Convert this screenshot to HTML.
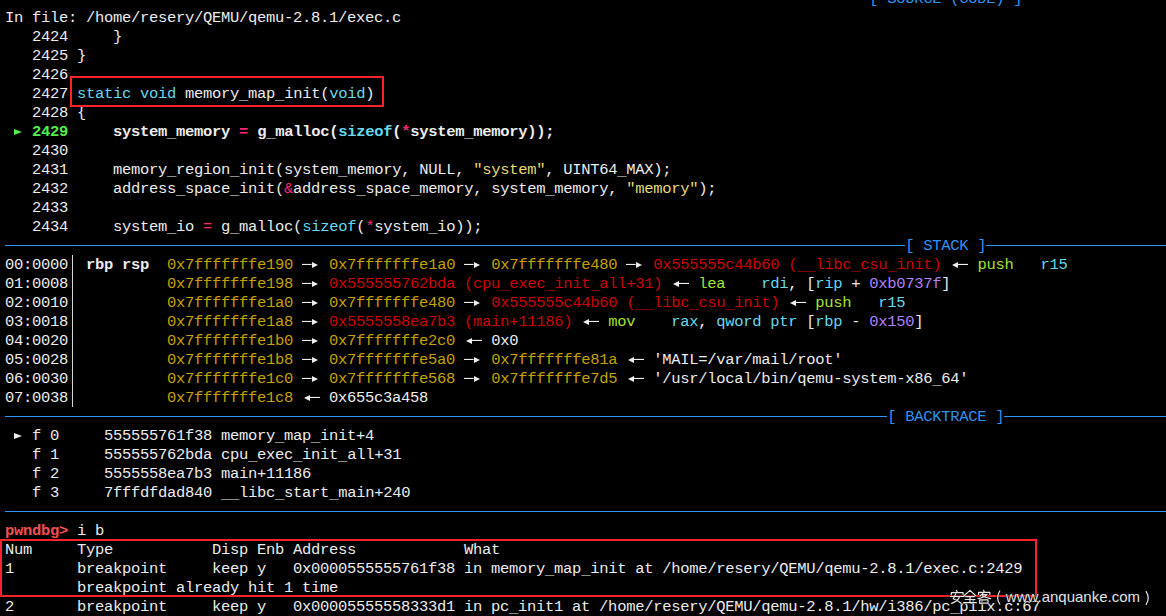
<!DOCTYPE html><html><head><meta charset="utf-8"><style>html,body{margin:0;padding:0;background:#000;width:1166px;height:616px;overflow:hidden;}
.t{position:absolute;left:5px;height:19px;line-height:19px;white-space:pre;font-family:"Liberation Mono",monospace;font-size:15.5px;letter-spacing:-0.3px;color:#ececec;}
.w{color:#ececec}
.b{color:#2f93f2}
.k{color:#66d9ef}
.s{color:#e6db74}
.o{color:#f92672}
.g{color:#52ee4c}
.y{color:#c4a000}
.r{color:#cc0000}
.f{color:#a6e22e}
.n{color:#ae81ff}
.p{color:#f25050}
.B{font-weight:bold}
u{text-decoration:none;position:relative;top:1px}
.A{display:inline-block;width:18px;height:19px;vertical-align:top;position:relative}
.A svg{position:absolute;left:0;top:0}
.T{display:inline-block;width:9px;height:19px;vertical-align:top;position:relative}
.T:after{content:"";position:absolute;left:0px;top:6px;border-left:8.6px solid;border-top:3.1px solid transparent;border-bottom:3.1px solid transparent;width:0;height:0}
.tg{color:#52ee4c}.tw{color:#ececec}
.hl{position:absolute;height:1px;background:#2f93f2}
.vb{position:absolute;left:72px;width:1px;background:#d8d8d8}
.box{position:absolute;border:2px solid #fa222d;box-sizing:border-box}</style></head><body><div class="t" style="top:-10px">                                                                                                <span class="b">[ SOURCE (CODE) ]</span></div>
<div class="t" style="top:9px">In file: /home/resery/QEMU/qemu-2.8.1/exec.c</div>
<div class="t" style="top:28px">   2424     }</div>
<div class="t" style="top:47px">   2425 }</div>
<div class="t" style="top:66px">   2426 </div>
<div class="t" style="top:85px">   2427 <span class="k">static</span> <span class="k">void</span> memory<u>_</u>map<u>_</u>init(<span class="k">void</span>)</div>
<div class="t" style="top:104px">   2428 {</div>
<div class="t" style="top:123px"> <i class="T tg"></i> <span class="g B">2429</span><span class="w B">     system<u>_</u>memory </span><span class="o B">=</span><span class="w B"> g<u>_</u>malloc(</span><span class="k B">sizeof</span><span class="w B">(</span><span class="o B">*</span><span class="w B">system<u>_</u>memory));</span></div>
<div class="t" style="top:142px">   2430 </div>
<div class="t" style="top:161px">   2431     memory<u>_</u>region<u>_</u>init(system<u>_</u>memory, NULL, <span class="s">&quot;system&quot;</span>, UINT64<u>_</u>MAX);</div>
<div class="t" style="top:180px">   2432     address<u>_</u>space<u>_</u>init(<span class="o">&amp;</span>address<u>_</u>space<u>_</u>memory, system<u>_</u>memory, <span class="s">&quot;memory&quot;</span>);</div>
<div class="t" style="top:199px">   2433 </div>
<div class="t" style="top:218px">   2434     system<u>_</u>io <span class="o">=</span> g<u>_</u>malloc(<span class="k">sizeof</span>(<span class="o">*</span>system<u>_</u>io));</div>
<div class="t" style="top:237px">                                                                                                    <span class="b">[ STACK ]</span></div>
<div class="t" style="top:256px">00:0000  <span class="w B">rbp rsp</span>  <span class="y">0x7fffffffe190</span> <i class="A"><svg class="ar" width="18" height="19" viewBox="0 0 18 19"><rect x="-0.6" y="7.9" width="10.2" height="1.1" fill="#eee"/><path d="M10 5.9 L16 8.9 L10 11.9 Z" fill="#eee"/></svg></i> <span class="y">0x7fffffffe1a0</span> <i class="A"><svg class="ar" width="18" height="19" viewBox="0 0 18 19"><rect x="-0.6" y="7.9" width="10.2" height="1.1" fill="#eee"/><path d="M10 5.9 L16 8.9 L10 11.9 Z" fill="#eee"/></svg></i> <span class="y">0x7fffffffe480</span> <i class="A"><svg class="ar" width="18" height="19" viewBox="0 0 18 19"><rect x="-0.6" y="7.9" width="10.2" height="1.1" fill="#eee"/><path d="M10 5.9 L16 8.9 L10 11.9 Z" fill="#eee"/></svg></i> <span class="r">0x555555c44b60 (<u>_</u><u>_</u>libc<u>_</u>csu<u>_</u>init)</span> <i class="A"><svg class="ar" width="18" height="19" viewBox="0 0 18 19"><path d="M2 8.9 L8 5.9 L8 11.9 Z" fill="#eee"/><rect x="8" y="7.9" width="10.5" height="1.1" fill="#eee"/></svg></i> <span class="f">push</span>   <span class="k">r15</span></div>
<div class="t" style="top:275px">01:0008           <span class="y">0x7fffffffe198</span> <i class="A"><svg class="ar" width="18" height="19" viewBox="0 0 18 19"><rect x="-0.6" y="7.9" width="10.2" height="1.1" fill="#eee"/><path d="M10 5.9 L16 8.9 L10 11.9 Z" fill="#eee"/></svg></i> <span class="r">0x555555762bda (cpu<u>_</u>exec<u>_</u>init<u>_</u>all+31)</span> <i class="A"><svg class="ar" width="18" height="19" viewBox="0 0 18 19"><path d="M2 8.9 L8 5.9 L8 11.9 Z" fill="#eee"/><rect x="8" y="7.9" width="10.5" height="1.1" fill="#eee"/></svg></i> <span class="f">lea</span>    <span class="k">rdi</span>, [<span class="k">rip</span> + <span class="n">0xb0737f</span>]</div>
<div class="t" style="top:294px">02:0010           <span class="y">0x7fffffffe1a0</span> <i class="A"><svg class="ar" width="18" height="19" viewBox="0 0 18 19"><rect x="-0.6" y="7.9" width="10.2" height="1.1" fill="#eee"/><path d="M10 5.9 L16 8.9 L10 11.9 Z" fill="#eee"/></svg></i> <span class="y">0x7fffffffe480</span> <i class="A"><svg class="ar" width="18" height="19" viewBox="0 0 18 19"><rect x="-0.6" y="7.9" width="10.2" height="1.1" fill="#eee"/><path d="M10 5.9 L16 8.9 L10 11.9 Z" fill="#eee"/></svg></i> <span class="r">0x555555c44b60 (<u>_</u><u>_</u>libc<u>_</u>csu<u>_</u>init)</span> <i class="A"><svg class="ar" width="18" height="19" viewBox="0 0 18 19"><path d="M2 8.9 L8 5.9 L8 11.9 Z" fill="#eee"/><rect x="8" y="7.9" width="10.5" height="1.1" fill="#eee"/></svg></i> <span class="f">push</span>   <span class="k">r15</span></div>
<div class="t" style="top:313px">03:0018           <span class="y">0x7fffffffe1a8</span> <i class="A"><svg class="ar" width="18" height="19" viewBox="0 0 18 19"><rect x="-0.6" y="7.9" width="10.2" height="1.1" fill="#eee"/><path d="M10 5.9 L16 8.9 L10 11.9 Z" fill="#eee"/></svg></i> <span class="r">0x5555558ea7b3 (main+11186)</span> <i class="A"><svg class="ar" width="18" height="19" viewBox="0 0 18 19"><path d="M2 8.9 L8 5.9 L8 11.9 Z" fill="#eee"/><rect x="8" y="7.9" width="10.5" height="1.1" fill="#eee"/></svg></i> <span class="f">mov</span>    <span class="k">rax</span>, <span class="k">qword ptr</span> [<span class="k">rbp</span> - <span class="n">0x150</span>]</div>
<div class="t" style="top:332px">04:0020           <span class="y">0x7fffffffe1b0</span> <i class="A"><svg class="ar" width="18" height="19" viewBox="0 0 18 19"><rect x="-0.6" y="7.9" width="10.2" height="1.1" fill="#eee"/><path d="M10 5.9 L16 8.9 L10 11.9 Z" fill="#eee"/></svg></i> <span class="y">0x7fffffffe2c0</span> <i class="A"><svg class="ar" width="18" height="19" viewBox="0 0 18 19"><path d="M2 8.9 L8 5.9 L8 11.9 Z" fill="#eee"/><rect x="8" y="7.9" width="10.5" height="1.1" fill="#eee"/></svg></i> 0x0</div>
<div class="t" style="top:351px">05:0028           <span class="y">0x7fffffffe1b8</span> <i class="A"><svg class="ar" width="18" height="19" viewBox="0 0 18 19"><rect x="-0.6" y="7.9" width="10.2" height="1.1" fill="#eee"/><path d="M10 5.9 L16 8.9 L10 11.9 Z" fill="#eee"/></svg></i> <span class="y">0x7fffffffe5a0</span> <i class="A"><svg class="ar" width="18" height="19" viewBox="0 0 18 19"><rect x="-0.6" y="7.9" width="10.2" height="1.1" fill="#eee"/><path d="M10 5.9 L16 8.9 L10 11.9 Z" fill="#eee"/></svg></i> <span class="y">0x7fffffffe81a</span> <i class="A"><svg class="ar" width="18" height="19" viewBox="0 0 18 19"><path d="M2 8.9 L8 5.9 L8 11.9 Z" fill="#eee"/><rect x="8" y="7.9" width="10.5" height="1.1" fill="#eee"/></svg></i> &#x27;MAIL=/var/mail/root&#x27;</div>
<div class="t" style="top:370px">06:0030           <span class="y">0x7fffffffe1c0</span> <i class="A"><svg class="ar" width="18" height="19" viewBox="0 0 18 19"><rect x="-0.6" y="7.9" width="10.2" height="1.1" fill="#eee"/><path d="M10 5.9 L16 8.9 L10 11.9 Z" fill="#eee"/></svg></i> <span class="y">0x7fffffffe568</span> <i class="A"><svg class="ar" width="18" height="19" viewBox="0 0 18 19"><rect x="-0.6" y="7.9" width="10.2" height="1.1" fill="#eee"/><path d="M10 5.9 L16 8.9 L10 11.9 Z" fill="#eee"/></svg></i> <span class="y">0x7fffffffe7d5</span> <i class="A"><svg class="ar" width="18" height="19" viewBox="0 0 18 19"><path d="M2 8.9 L8 5.9 L8 11.9 Z" fill="#eee"/><rect x="8" y="7.9" width="10.5" height="1.1" fill="#eee"/></svg></i> &#x27;/usr/local/bin/qemu-system-x86<u>_</u>64&#x27;</div>
<div class="t" style="top:389px">07:0038           <span class="y">0x7fffffffe1c8</span> <i class="A"><svg class="ar" width="18" height="19" viewBox="0 0 18 19"><path d="M2 8.9 L8 5.9 L8 11.9 Z" fill="#eee"/><rect x="8" y="7.9" width="10.5" height="1.1" fill="#eee"/></svg></i> 0x655c3a458</div>
<div class="t" style="top:408px">                                                                                                  <span class="b">[ BACKTRACE ]</span></div>
<div class="t" style="top:427px"> <i class="T tw"></i> f 0     555555761f38 memory<u>_</u>map<u>_</u>init+4</div>
<div class="t" style="top:446px">   f 1     555555762bda cpu<u>_</u>exec<u>_</u>init<u>_</u>all+31</div>
<div class="t" style="top:465px">   f 2     5555558ea7b3 main+11186</div>
<div class="t" style="top:484px">   f 3     7fffdfdad840 <u>_</u><u>_</u>libc<u>_</u>start<u>_</u>main+240</div>
<div class="t" style="top:522px"><span class="p B">pwndbg&gt;</span> i b</div>
<div class="t" style="top:541px">Num     Type           Disp Enb Address            What</div>
<div class="t" style="top:560px">1       breakpoint     keep y   0x0000555555761f38 in memory<u>_</u>map<u>_</u>init at /home/resery/QEMU/qemu-2.8.1/exec.c:2429</div>
<div class="t" style="top:579px">        breakpoint already hit 1 time</div>
<div class="t" style="top:598px">2       breakpoint     keep y   0x00005555558333d1 in pc<u>_</u>init1 at /home/resery/QEMU/qemu-2.8.1/hw/i386/pc<u>_</u>piix.c:67</div>
<div class="hl" style="top:245px;left:5px;width:900px"></div>
<div class="hl" style="top:245px;left:986px;width:180px"></div>
<div class="hl" style="top:416px;left:5px;width:882px"></div>
<div class="hl" style="top:416px;left:1004px;width:162px"></div>
<div class="hl" style="top:511px;left:5px;width:1161px"></div>
<div class="vb" style="top:255px;height:152px"></div>
<div class="box" style="left:70px;top:76px;width:314px;height:31px"></div>
<div class="box" style="left:0px;top:539px;width:1037px;height:58px"></div>
<svg style="position:absolute;left:0;top:0" width="1166" height="616" viewBox="0 0 1166 616">
<g fill="none" stroke="#000" stroke-opacity="0.55" stroke-width="2.6" stroke-linecap="round" stroke-linejoin="round"><path d="M956.5 590.4 L957.4 592.2 M951.3 594.8 L951.3 592.7 L963.1 592.7 L963.1 594.6 M950.3 596.5 L964 596.5 M955.8 594 L953.2 598.8 Q957 600 961.2 603.2 M959.4 597 Q958 601 951.6 603.4"/><path d="M970 590.4 L964 595.8 M970 590.4 L975.8 595.8 M965.6 596.6 L974.4 596.6 M965.2 599.5 L975 599.5 M963.6 602.7 L976.4 602.7 M970 596.6 L970 602.7"/><path d="M983.6 590.3 L984.3 592 M978.6 594.5 L978.6 592.4 L989.9 592.4 L989.9 594.4 M983 593.4 L980.2 595.8 M981.5 594.6 L987 594.6 Q984 597.5 978 598.6 M982.6 596 Q986 597.8 990.6 598.6 M979.7 599.8 L988 599.8 L988 603.2 L979.7 603.2 Z"/><path d="M999.8 591 Q995.6 597.6 999.8 604.2"/><path d="M1146.2 591.6 Q1150.2 598 1146.2 604.4"/></g>
<g fill="none" stroke="#e6e6e6" stroke-width="1.2" stroke-linecap="round" stroke-linejoin="round"><path d="M956.5 590.4 L957.4 592.2 M951.3 594.8 L951.3 592.7 L963.1 592.7 L963.1 594.6 M950.3 596.5 L964 596.5 M955.8 594 L953.2 598.8 Q957 600 961.2 603.2 M959.4 597 Q958 601 951.6 603.4"/><path d="M970 590.4 L964 595.8 M970 590.4 L975.8 595.8 M965.6 596.6 L974.4 596.6 M965.2 599.5 L975 599.5 M963.6 602.7 L976.4 602.7 M970 596.6 L970 602.7"/><path d="M983.6 590.3 L984.3 592 M978.6 594.5 L978.6 592.4 L989.9 592.4 L989.9 594.4 M983 593.4 L980.2 595.8 M981.5 594.6 L987 594.6 Q984 597.5 978 598.6 M982.6 596 Q986 597.8 990.6 598.6 M979.7 599.8 L988 599.8 L988 603.2 L979.7 603.2 Z"/><path d="M999.8 591 Q995.6 597.6 999.8 604.2"/><path d="M1146.2 591.6 Q1150.2 598 1146.2 604.4"/></g>
</svg>
<div style="position:absolute;left:1005.8px;top:587px;height:19px;line-height:19px;font-family:'Liberation Sans',sans-serif;font-size:15px;color:#e2e2e2;white-space:pre;text-shadow:0 0 1.5px #000,0 0 1px #000">www.anquanke.com</div></body></html>
